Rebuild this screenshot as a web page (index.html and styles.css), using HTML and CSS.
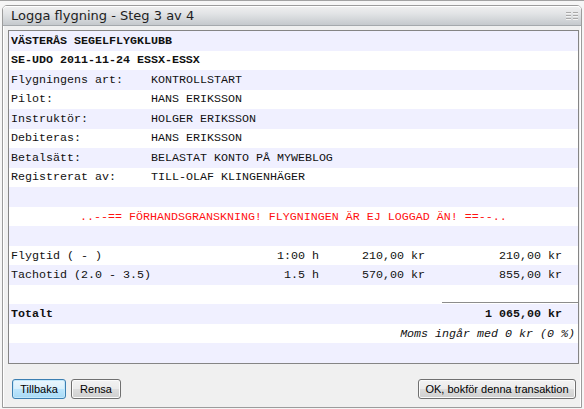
FILE: index.html
```html
<!DOCTYPE html>
<html lang="sv">
<head>
<meta charset="utf-8">
<title>Logga flygning</title>
<link rel="stylesheet" href="styles.css">
</head>
<body>
<div class="window">
  <div class="titlebar">
    <span class="title">Logga flygning - Steg 3 av 4</span>
    <svg class="menu-icon" width="12" height="10" viewBox="0 0 12 10">
      <rect x="0" y="1" width="5" height="1" fill="#a9a9a9"/>
      <rect x="0" y="2" width="5" height="1" fill="#f2f2f2"/>
      <rect x="7" y="1" width="5" height="1" fill="#a9a9a9"/>
      <rect x="7" y="2" width="5" height="1" fill="#f2f2f2"/>
      <rect x="0" y="4" width="5" height="1" fill="#a9a9a9"/>
      <rect x="0" y="5" width="5" height="1" fill="#f2f2f2"/>
      <rect x="7" y="4" width="5" height="1" fill="#a9a9a9"/>
      <rect x="7" y="5" width="5" height="1" fill="#f2f2f2"/>
      <rect x="0" y="7" width="5" height="1" fill="#a9a9a9"/>
      <rect x="0" y="8" width="5" height="1" fill="#f2f2f2"/>
      <rect x="7" y="7" width="5" height="1" fill="#a9a9a9"/>
      <rect x="7" y="8" width="5" height="1" fill="#f2f2f2"/>
    </svg>
  </div>
  <div class="client">
    <div class="panel">
      <div class="row kv bold"><span>VÄSTERÅS SEGELFLYGKLUBB</span></div>
      <div class="row kv bold"><span>SE-UDO 2011-11-24 ESSX-ESSX</span></div>
      <div class="row kv"><span>Flygningens art:</span><span>KONTROLLSTART</span></div>
      <div class="row kv"><span>Pilot:</span><span>HANS ERIKSSON</span></div>
      <div class="row kv"><span>Instruktör:</span><span>HOLGER ERIKSSON</span></div>
      <div class="row kv"><span>Debiteras:</span><span>HANS ERIKSSON</span></div>
      <div class="row kv"><span>Betalsätt:</span><span>BELASTAT KONTO PÅ MYWEBLOG</span></div>
      <div class="row kv"><span>Registrerat av:</span><span>TILL-OLAF KLINGENHÄGER</span></div>
      <div class="row"></div>
      <div class="row warning"><span>..--== FÖRHANDSGRANSKNING! FLYGNINGEN ÄR EJ LOGGAD ÄN! ==--..</span></div>
      <div class="row"></div>
      <div class="row charge"><span class="c-label">Flygtid ( - )</span><span class="c-hours">1:00 h</span><span class="c-price">210,00 kr</span><span class="c-total">210,00 kr</span></div>
      <div class="row charge"><span class="c-label">Tachotid (2.0 - 3.5)</span><span class="c-hours">1.5 h</span><span class="c-price">570,00 kr</span><span class="c-total">855,00 kr</span></div>
      <div class="row sep"></div>
      <div class="row charge sum"><span class="c-label">Totalt</span><span class="c-hours"></span><span class="c-price"></span><span class="c-total">1 065,00 kr</span></div>
      <div class="row vat"><span>Moms ingår med 0 kr (0 %)</span></div>
      <div class="row"></div>
    </div>
    <div class="footer">
      <div class="btn-group">
        <button class="btn btn-focus">Tillbaka</button>
        <button class="btn btn-rensa">Rensa</button>
      </div>
      <button class="btn btn-ok">OK, bokför denna transaktion</button>
    </div>
  </div>
</div>
</body>
</html>
```

FILE: styles.css
```css
html, body {
  margin: 0;
  padding: 0;
}

body {
  background: #f6f6f6;
  border-top: 1px solid #a2a2a2;
  padding: 4px 2px 0 2px;
  height: 408px;
  box-sizing: border-box;
}

.window {
  border: 1px solid #9c9c9c;
  border-radius: 5px 5px 0 0;
  background: #f0f0f0;
  box-shadow: inset 1px 0 0 #ffffff, inset -1px 0 0 #ffffff;
}

.titlebar {
  height: 19px;
  border-bottom: 1px solid #a5a9ad;
  border-radius: 4px 4px 0 0;
  background: linear-gradient(#f0f0f0 0%, #e2e4e6 40%, #c5c9cd 100%);
  box-shadow: inset 0 1px 0 #ffffff;
  display: flex;
  align-items: center;
  justify-content: space-between;
  padding: 0 3px 0 8px;
}

.title {
  font-family: "DejaVu Sans", Verdana, sans-serif;
  font-size: 13px;
  line-height: 19px;
  color: #1e1e1e;
}

.menu-icon {
  display: block;
  margin-top: 1px;
}

.client {
  padding: 4px 2px 0 5px;
}

.panel {
  border: 1px solid #858585;
  background: #ffffff;
  height: 332px;
  display: grid;
  grid-template-rows: repeat(17, 1fr);
  font-family: "Courier New", "Nimbus Mono PS", "Nimbus Mono L", FreeMono, "Liberation Mono", monospace;
  font-size: 11.67px;
  color: #111111;
}

.row {
  display: grid;
  align-items: center;
  white-space: pre;
}

.row:nth-child(odd) {
  background: #f0f0ff;
}

.kv {
  grid-template-columns: 140px 1fr;
  padding-left: 2px;
}

.kv.bold span {
  grid-column: 1 / span 2;
}

.bold {
  font-weight: bold;
}

.warning {
  color: #ff1111;
  padding-left: 71px;
}

.charge {
  grid-template-columns: 1fr 80px 106px 136px;
  height: 100%;
}

.charge span {
  display: flex;
  align-items: center;
  height: 100%;
  box-sizing: border-box;
}

.c-label {
  padding-left: 2px;
}

.c-hours,
.c-price {
  justify-content: flex-end;
  padding-right: 17px;
}

.c-total {
  justify-content: flex-end;
  padding-right: 16px;
}

.sum .c-label,
.sum .c-total {
  font-weight: bold;
}

.sep {
  grid-template-columns: 1fr 136px;
  align-items: end;
}

.sep::after {
  content: "";
  grid-column: 2;
  height: 1px;
  background: #8c8c8c;
  margin-bottom: 1px;
}

.vat {
  justify-items: end;
  padding-right: 3px;
  font-style: italic;
}

.footer {
  margin-top: 15px;
  padding: 0 3px 8px 4px;
  display: flex;
  justify-content: space-between;
  align-items: center;
}

.btn-group {
  display: flex;
  gap: 5px;
}

.btn {
  height: 20px;
  margin: 0;
  padding: 0;
  border: 1px solid #707070;
  border-radius: 3px;
  background: linear-gradient(#f2f2f2 0%, #ebebeb 50%, #dddddd 50%, #cfcfcf 100%);
  box-shadow: inset 0 0 0 1px #fbfbfb;
  font-family: "Liberation Sans", Arial, sans-serif;
  font-size: 11px;
  color: #000000;
  line-height: 18px;
}

.btn-focus {
  width: 54px;
  border-color: #3c7fb1;
  background: linear-gradient(#eaf6fd 0%, #d9f0fc 50%, #bee6fd 50%, #a7d9f5 100%);
  box-shadow: inset 0 0 0 1px #c4e8fb;
}

.btn-rensa {
  width: 50px;
}

.btn-ok {
  width: 158px;
}
```
